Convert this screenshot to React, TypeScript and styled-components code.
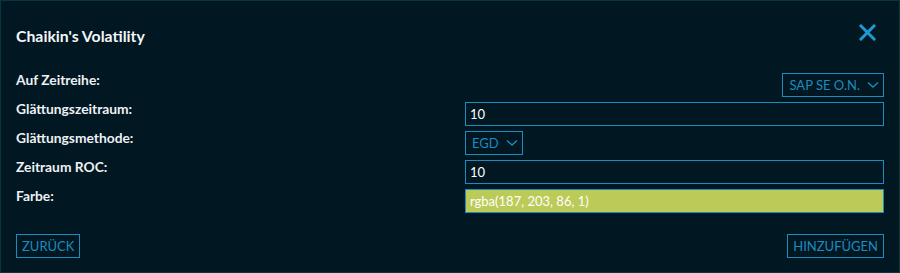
import * as React from 'react';
import styled, { createGlobalStyle } from 'styled-components';

const accent = '#1a8cc0';

const GlobalStyle = createGlobalStyle`
    html, body {
        margin: 0;
        padding: 0;
        background: #011722;
    }
    * {
        box-sizing: border-box;
    }
`;

const Dialog = styled.div`
    width: 900px;
    height: 273px;
    background: #011722;
    border: 1px solid #0c3344;
    padding: 0 15px;
    font-family: Lato, "Noto Sans", sans-serif;
    color: #eef1f3;
    display: flex;
    flex-direction: column;
`;

const Header = styled.div`
    height: 72px;
    display: flex;
    align-items: center;
    justify-content: space-between;
`;

const Title = styled.h1`
    margin: 0 0 3px;
    font-size: 15.8px;
    font-weight: 700;
    color: #f4f6f7;
`;

const CloseButton = styled.button`
    background: none;
    border: none;
    padding: 0;
    margin: 0 8px 9px 0;
    width: 17px;
    height: 17px;
    display: flex;
    cursor: pointer;
`;

const Form = styled.div`
    display: grid;
    grid-template-columns: 1fr 419px;
    grid-auto-rows: 24px;
    row-gap: 5px;
`;

const Label = styled.label`
    font-size: 13.8px;
    font-weight: 700;
    line-height: 14px;
    align-self: start;
    color: #eef1f3;
`;

const Select = styled.div<{ $align?: 'start' | 'end' }>`
    justify-self: ${ p => p.$align ?? 'start' };
    display: inline-flex;
    align-items: center;
    gap: 7px;
    height: 24px;
    padding: 0 4px 0 6px;
    border: 1px solid ${ accent };
    color: ${ accent };
    font-size: 13px;
    cursor: pointer;
`;

const Input = styled.input<{ $fill?: string }>`
    width: 100%;
    height: 24px;
    border: 1px solid ${ accent };
    background: ${ p => p.$fill ?? 'transparent' };
    color: #ffffff;
    font-family: inherit;
    font-size: 13px;
    padding: 0 4px;
    outline: none;
`;

const Footer = styled.div`
    margin-top: 21px;
    display: flex;
    justify-content: space-between;
`;

const TextButton = styled.button`
    height: 24px;
    padding: 0 5px;
    background: none;
    border: 1px solid ${ accent };
    color: ${ accent };
    font-family: inherit;
    font-size: 13px;
    text-transform: uppercase;
    cursor: pointer;
`;

const Chevron = () => (
    <svg width="12" height="8" viewBox="0 0 12 8" fill="none">
        <path d="M1 1.5 L6 6 L11 1.5" stroke={ accent } strokeWidth="1.4"/>
    </svg>
);

const CloseIcon = () => (
    <svg width="17" height="17" viewBox="0 0 17 17">
        <path d="M2 2 L15 15 M15 2 L2 15" stroke="#1b9ad6" strokeWidth="3" strokeLinecap="square"/>
    </svg>
);

export default function App()
{
    return (
        <>
            <GlobalStyle/>
            <Dialog>
                <Header>
                    <Title>Chaikin's Volatility</Title>
                    <CloseButton aria-label="Schließen">
                        <CloseIcon/>
                    </CloseButton>
                </Header>
                <Form>
                    <Label>Auf Zeitreihe:</Label>
                    <Select $align="end">
                        SAP SE O.N.
                        <Chevron/>
                    </Select>

                    <Label>Glättungszeitraum:</Label>
                    <Input defaultValue="10"/>

                    <Label>Glättungsmethode:</Label>
                    <Select>
                        EGD
                        <Chevron/>
                    </Select>

                    <Label>Zeitraum ROC:</Label>
                    <Input defaultValue="10"/>

                    <Label>Farbe:</Label>
                    <Input $fill="#bccb58" defaultValue="rgba(187, 203, 86, 1)"/>
                </Form>
                <Footer>
                    <TextButton>Zurück</TextButton>
                    <TextButton>Hinzufügen</TextButton>
                </Footer>
            </Dialog>
        </>
    );
}
